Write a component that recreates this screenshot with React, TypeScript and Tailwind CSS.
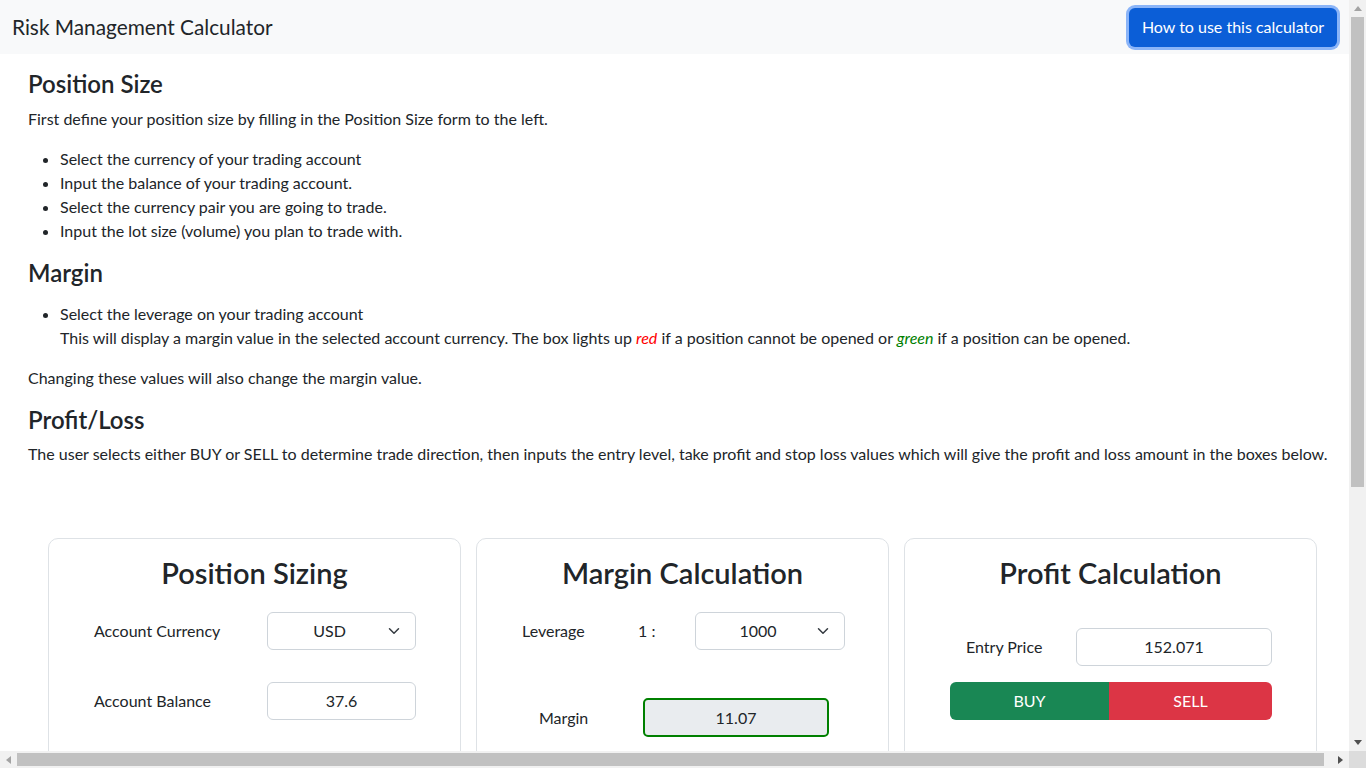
import React from "react";

function Chevron() {
  return (
    <svg width="16" height="12" viewBox="0 0 16 16" className="absolute right-[13px] top-1/2 -translate-y-1/2">
      <path d="M2 5l6 6 6-6" fill="none" stroke="#343a40" strokeWidth="2" strokeLinecap="round" strokeLinejoin="round" />
    </svg>
  );
}

function SelectBox({ value, w }: { value: string; w: string }) {
  return (
    <div className={`relative flex h-[38px] items-center rounded-[6px] border border-[#ced4da] bg-white pl-3 pr-9 ${w}`}>
      <span className="w-full text-center">{value}</span>
      <Chevron />
    </div>
  );
}

function InputBox({ value, w }: { value: string; w: string }) {
  return (
    <div className={`flex h-[38px] items-center justify-center rounded-[6px] border border-[#ced4da] bg-white px-3 ${w}`}>
      {value}
    </div>
  );
}

function Card({ title, children }: { title: string; children: React.ReactNode }) {
  return (
    <div className="min-h-[320px] w-[413px] shrink-0 rounded-[10px] border border-[#dee2e6] bg-white pt-4 pb-6">
      <h2 className="text-center text-[29px] font-semibold leading-[36px]">{title}</h2>
      {children}
    </div>
  );
}

export default function App() {
  return (
    <div
      className="flex h-screen w-screen flex-col overflow-hidden bg-white text-[16px] leading-6 text-[#212529]"
      style={{ fontFamily: "Lato, 'Liberation Sans', sans-serif" }}
    >
      <div className="flex min-h-0 flex-1">
        <div className="min-w-0 flex-1 overflow-hidden">
          {/* Navbar */}
          <nav className="flex h-[54px] items-center justify-between bg-[#f8f9fa] pl-3 pr-3">
            <span className="text-[20.8px] leading-[30px]">Risk Management Calculator</span>
            <button className="flex h-[39px] w-[208px] items-center justify-center rounded-[6px] bg-[#0b5ed7] text-white shadow-[0_0_0_3px_#8ab4f8]">
              How to use this calculator
            </button>
          </nav>

          {/* Instructions */}
          <div className="px-7 pt-4">
            <h4 className="mb-2 text-[24px] font-semibold leading-[28.8px]">Position Size</h4>
            <p className="mb-4">First define your position size by filling in the Position Size form to the left.</p>
            <ul className="mb-4 list-disc pl-8">
              <li>Select the currency of your trading account</li>
              <li>Input the balance of your trading account.</li>
              <li>Select the currency pair you are going to trade.</li>
              <li>Input the lot size (volume) you plan to trade with.</li>
            </ul>
            <h4 className="mb-[14px] text-[24px] font-semibold leading-[28.8px]">Margin</h4>
            <ul className="mb-4 list-disc pl-8">
              <li>
                Select the leverage on your trading account
                <br />
                This will display a margin value in the selected account currency. The box lights up{" "}
                <i className="text-[#ff0000]">red</i> if a position cannot be opened or{" "}
                <i className="text-[#008000]">green</i> if a position can be opened.
              </li>
            </ul>
            <p className="mb-4">Changing these values will also change the margin value.</p>
            <h4 className="mb-2 text-[24px] font-semibold leading-[28.8px]">Profit/Loss</h4>
            <p className="whitespace-nowrap">
              The user selects either BUY or SELL to determine trade direction, then inputs the entry level, take profit and stop loss values which will give the profit and loss amount in the boxes below.
            </p>
          </div>

          {/* Cards */}
          <div className="mt-[72px] flex gap-[15px] pl-12">
            <Card title="Position Sizing">
              <div className="mt-[21px] flex items-center pl-[45px]">
                <span className="w-[173px]">Account Currency</span>
                <SelectBox value="USD" w="w-[149px]" />
              </div>
              <div className="mt-8 flex items-center pl-[45px]">
                <span className="w-[173px]">Account Balance</span>
                <InputBox value="37.6" w="w-[149px]" />
              </div>
            </Card>

            <Card title="Margin Calculation">
              <div className="mt-[21px] flex items-center pl-[45px]">
                <span className="w-[116px]">Leverage</span>
                <span className="w-[57px]">1 :</span>
                <SelectBox value="1000" w="w-[150px]" />
              </div>
              <div className="mt-12 flex items-center pl-[62px]">
                <span className="w-[104px]">Margin</span>
                <div className="flex h-[39px] w-[186px] items-center justify-center rounded-[5px] border-2 border-[#008000] bg-[#e9ecef]">
                  11.07
                </div>
              </div>
            </Card>

            <Card title="Profit Calculation">
              <div className="mt-[37px] flex items-center pl-[61px]">
                <span className="w-[110px]">Entry Price</span>
                <InputBox value="152.071" w="w-[196px]" />
              </div>
              <div className="mt-4 ml-[45px] flex h-[38px] w-[322px] overflow-hidden rounded-[6px] text-white">
                <div className="flex w-[159px] items-center justify-center bg-[#198754]">BUY</div>
                <div className="flex flex-1 items-center justify-center bg-[#dc3545]">SELL</div>
              </div>
            </Card>
          </div>
        </div>

        {/* Vertical scrollbar */}
        <div className="flex w-[17px] shrink-0 flex-col bg-[#f1f1f1]">
          <div className="flex h-[17px] items-center justify-center">
            <svg width="8" height="5" viewBox="0 0 8 5"><path d="M0 5L4 0L8 5Z" fill="#a3a3a3" /></svg>
          </div>
          <div className="flex-1">
            <div className="mx-[2px] h-[470px] bg-[#c1c1c1]" />
          </div>
          <div className="flex h-[17px] items-center justify-center">
            <svg width="8" height="5" viewBox="0 0 8 5"><path d="M0 0L8 0L4 5Z" fill="#505050" /></svg>
          </div>
        </div>
      </div>

      {/* Horizontal scrollbar */}
      <div className="flex h-[17px] shrink-0">
        <div className="flex flex-1 bg-[#f1f1f1]">
          <div className="flex w-[17px] items-center justify-center">
            <svg width="5" height="8" viewBox="0 0 5 8"><path d="M5 0L0 4L5 8Z" fill="#a3a3a3" /></svg>
          </div>
          <div className="flex flex-1 items-center">
            <div className="h-[13px] w-[1307px] bg-[#c1c1c1]" />
          </div>
          <div className="flex w-[17px] items-center justify-center">
            <svg width="5" height="8" viewBox="0 0 5 8"><path d="M0 0L5 4L0 8Z" fill="#505050" /></svg>
          </div>
        </div>
        <div className="w-[17px] bg-[#dcdcdc]" />
      </div>
    </div>
  );
}
